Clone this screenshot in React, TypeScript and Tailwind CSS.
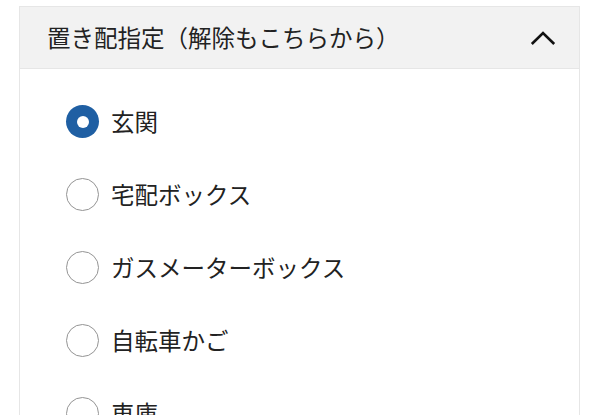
const options = ['玄関', '宅配ボックス', 'ガスメーターボックス', '自転車かご', '車庫'];

export default function App() {
	const selected = 0;
	return (
		<div
			className="h-[415px] w-[600px] overflow-hidden bg-white pt-[6px]"
			style={{fontFamily: '"Noto Sans CJK JP", "Noto Sans", sans-serif'}}
		>
			<div className="ml-[19px] mr-[20px] border border-[#e6e6e6]">
				<div className="flex h-[62px] items-center justify-between border-b border-[#e6e6e6] bg-[#f2f2f2] pl-[27px] pr-[23px]">
					<span className="text-[23.5px] leading-none text-[#222]">置き配指定（解除もこちらから）</span>
					<svg width="26" height="16" viewBox="0 0 26 16" fill="none">
						<path d="M1.8 14 L13 3 L24.2 14" stroke="#111" strokeWidth="2.6" />
					</svg>
				</div>
				<div className="pt-[16px]">
					{options.map((label, i) => (
						<div key={label} className="flex h-[73px] items-center pl-[46px]">
							{i === selected ? (
								<span className="flex h-[33px] w-[33px] items-center justify-center rounded-full bg-[#1f5fa3]">
									<span className="h-[12px] w-[12px] rounded-full bg-white" />
								</span>
							) : (
								<span className="h-[33px] w-[33px] rounded-full border-[1.8px] border-[#949494] bg-white" />
							)}
							<span className="ml-[12px] text-[23.5px] leading-none text-[#222]">{label}</span>
						</div>
					))}
				</div>
			</div>
		</div>
	);
}
